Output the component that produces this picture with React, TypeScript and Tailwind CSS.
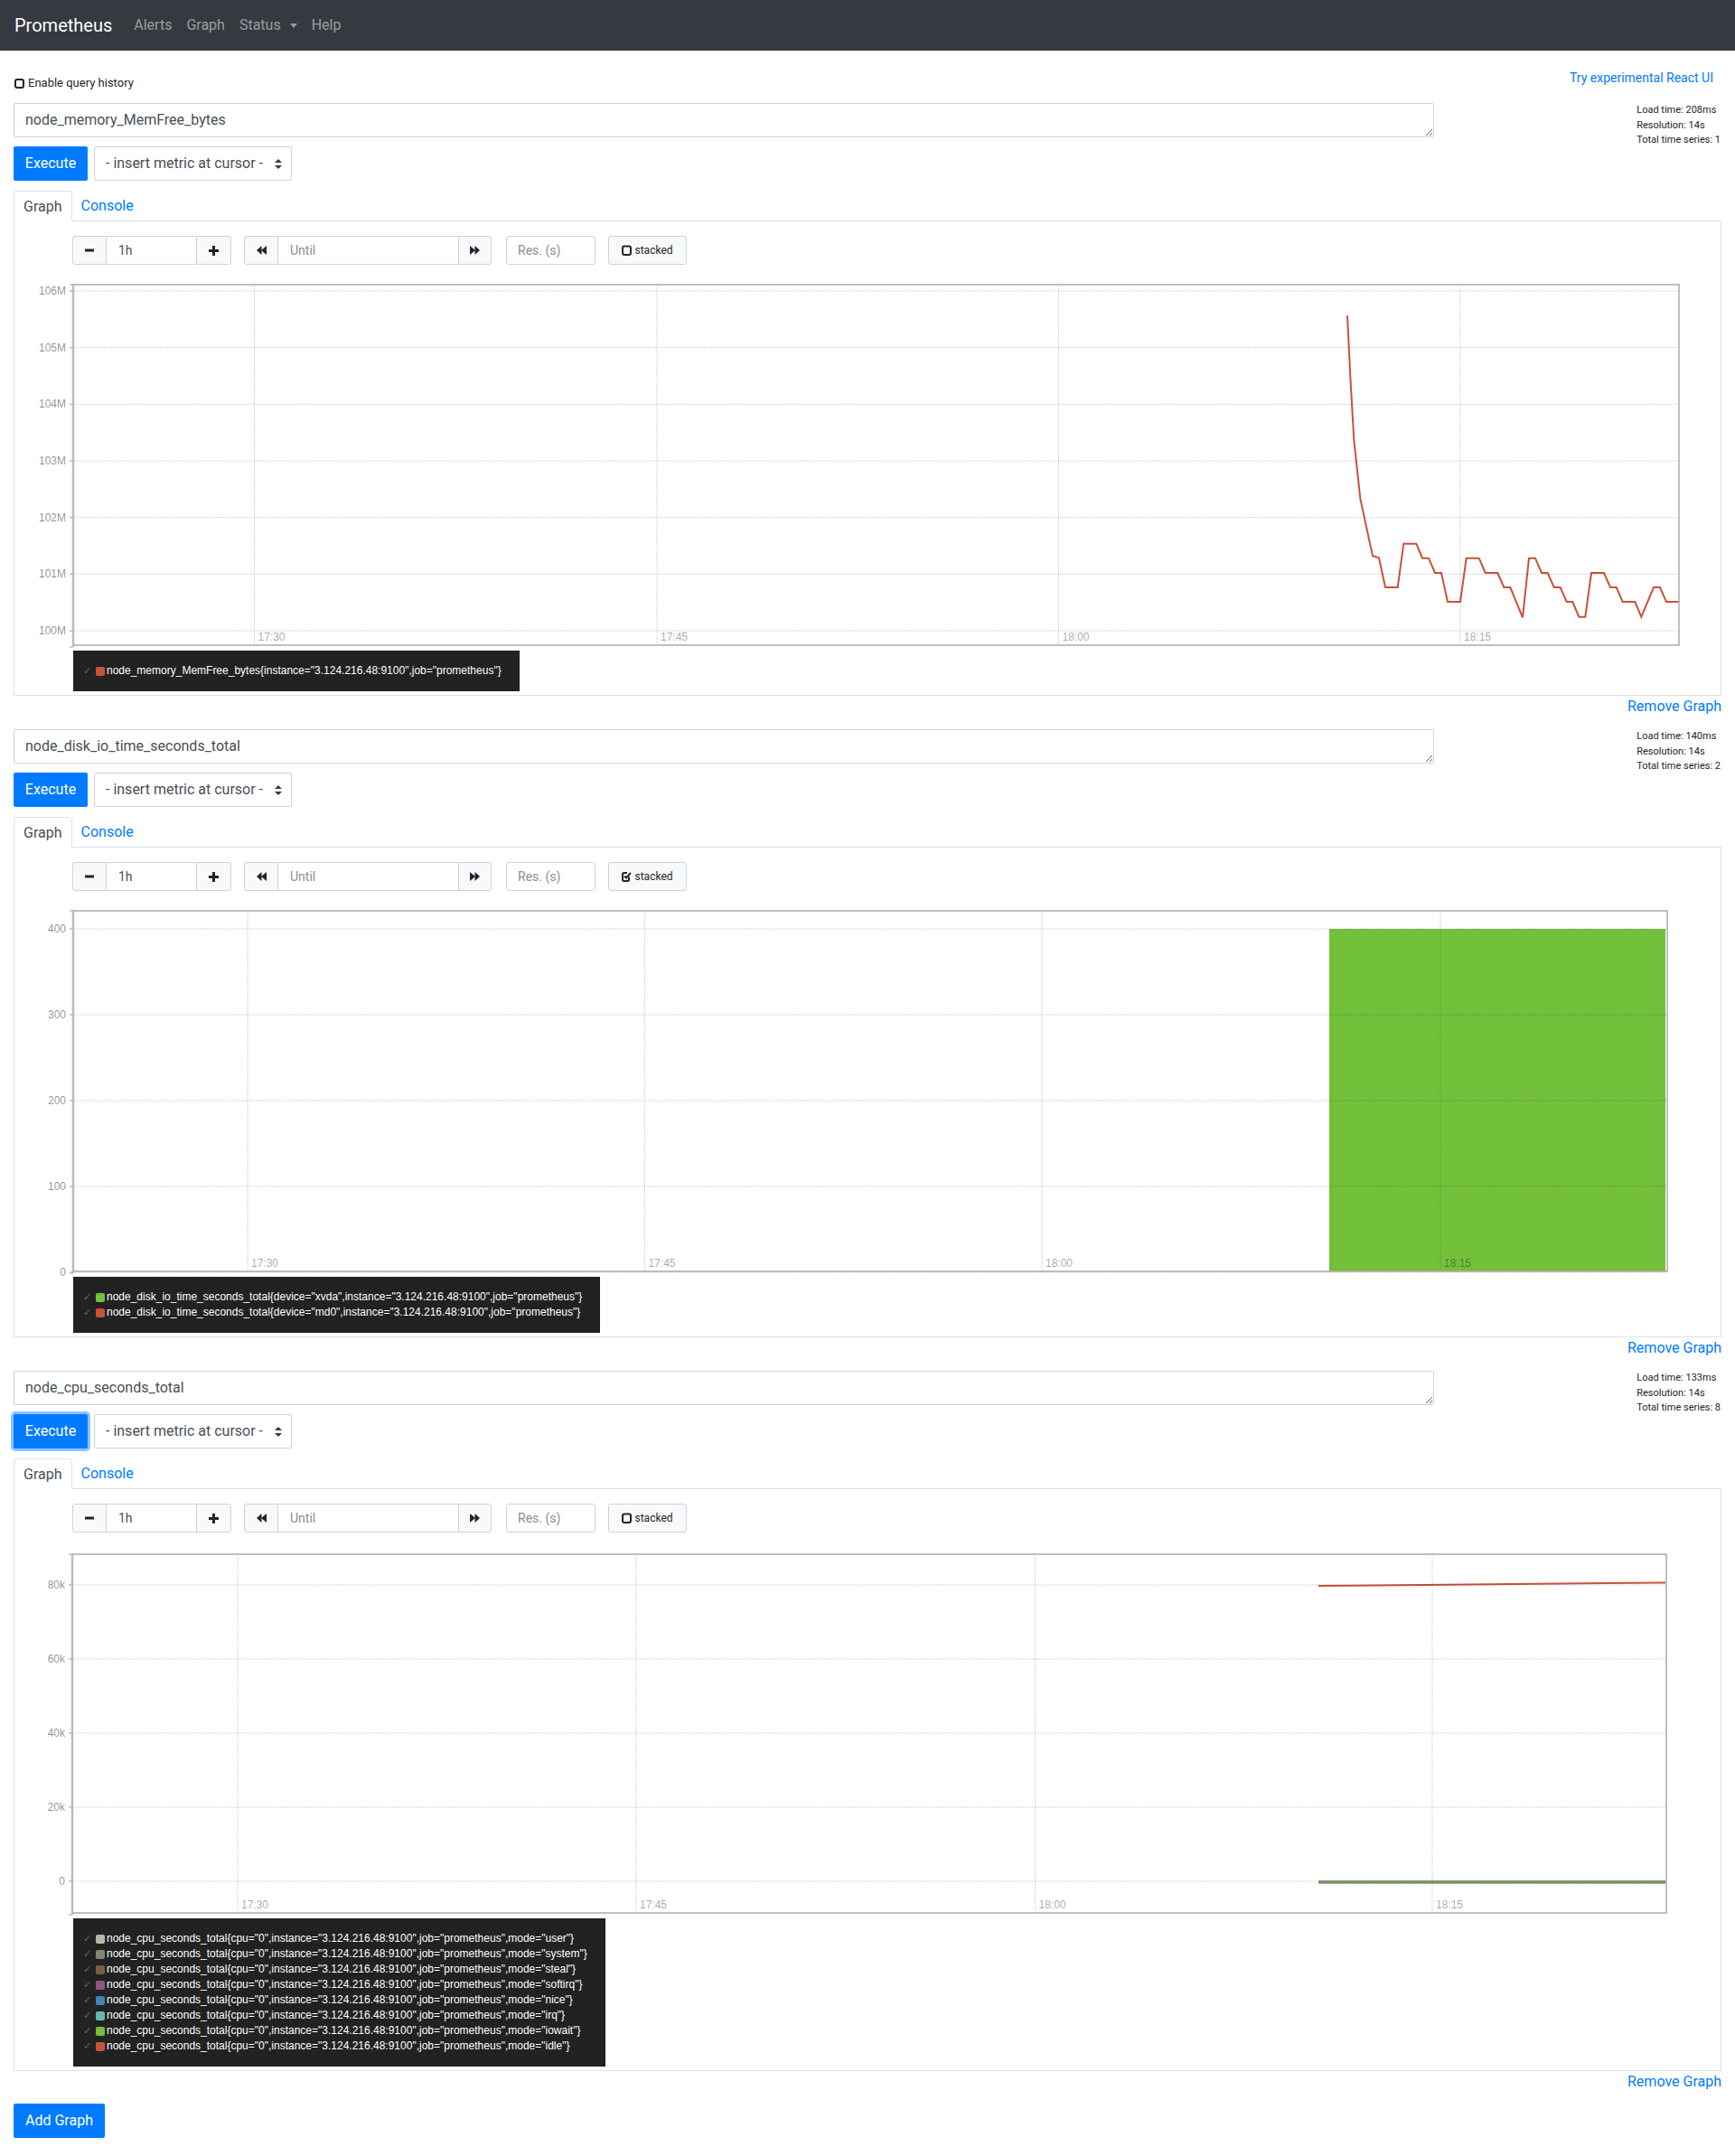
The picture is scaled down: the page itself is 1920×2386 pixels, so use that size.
import React from "react";

const ROBOTO = "font-[family-name:Roboto,'Noto_Sans',sans-serif]";
const ARIAL = "'Liberation Sans', Arial, sans-serif";

function Navbar() {
  return (
    <nav className="h-14 bg-[#343a40] flex items-center px-4">
      <span className="text-white text-[20px] leading-[30px] mr-4">Prometheus</span>
      <span className="px-2 text-base text-white/50">Alerts</span>
      <span className="px-2 text-base text-white/50">Graph</span>
      <span className="px-2 text-base text-white/50 flex items-center">
        Status
        <span className="ml-[10px] inline-block w-0 h-0 border-x-[4px] border-x-transparent border-t-[5px] border-t-white/50" />
      </span>
      <span className="px-2 text-base text-white/50">Help</span>
    </nav>
  );
}

function SelectArrows() {
  return (
    <svg width="8" height="11" viewBox="0 0 8 11">
      <polygon points="4,0 8,4 0,4" fill="#343a40" />
      <polygon points="0,7 8,7 4,11" fill="#343a40" />
    </svg>
  );
}

function MinusIcon() {
  return (
    <svg width="10" height="10" viewBox="0 0 10 10">
      <rect x="0" y="3.5" width="10" height="3" fill="#212529" />
    </svg>
  );
}
function PlusIcon() {
  return (
    <svg width="11" height="11" viewBox="0 0 11 11">
      <rect x="0" y="4" width="11" height="3" fill="#212529" />
      <rect x="4" y="0" width="3" height="11" fill="#212529" />
    </svg>
  );
}
function BackIcon() {
  return (
    <svg width="11" height="10" viewBox="0 0 11 10">
      <polygon points="0,5 5.5,0 5.5,10" fill="#212529" />
      <polygon points="5,5 11,0 11,10" fill="#212529" />
    </svg>
  );
}
function FwdIcon() {
  return (
    <svg width="11" height="10" viewBox="0 0 11 10">
      <polygon points="11,5 5.5,0 5.5,10" fill="#212529" />
      <polygon points="6,5 0,0 0,10" fill="#212529" />
    </svg>
  );
}
function SquareIcon({ checked }: { checked: boolean }) {
  return (
    <svg width="11" height="12" viewBox="0 0 11 12">
      {checked ? (
        <>
          <path d="M8,6.5 V9.5 a1.5,1.5 0 0 1 -1.5,1.5 H2.5 a1.5,1.5 0 0 1 -1.5,-1.5 V3.5 a1.5,1.5 0 0 1 1.5,-1.5 H6" fill="none" stroke="#212529" strokeWidth="2" />
          <path d="M3,5.5 L5,7.5 L10,2" fill="none" stroke="#212529" strokeWidth="2" />
        </>
      ) : (
        <rect x="1" y="1.5" width="9" height="9.5" rx="2" fill="none" stroke="#212529" strokeWidth="2" />
      )}
    </svg>
  );
}

type YT = { y: number; label: string };
type XT = { x: number; label: string };

function Chart({
  y0,
  right,
  top,
  bottom,
  yTicks,
  xTicks,
  children,
  left = 81,
}: {
  y0: number;
  right: number;
  top: number;
  bottom: number;
  yTicks: YT[];
  xTicks: XT[];
  children?: React.ReactNode;
  left?: number;
}) {
  return (
    <svg width="1888" height="411" viewBox={`16 ${y0} 1888 411`} overflow="visible" className="block mt-[12px] overflow-visible">
      {children}
      {yTicks.map((t) => (
        <line key={"h" + t.label} x1={left} x2={right} y1={t.y} y2={t.y} stroke="rgba(0,0,0,0.22)" strokeWidth="1" strokeDasharray="1 1" />
      ))}
      {xTicks.map((t) => (
        <line key={"v" + t.label} x1={t.x} x2={t.x} y1={top} y2={bottom} stroke="rgba(0,0,0,0.22)" strokeWidth="1" strokeDasharray="1 1" />
      ))}
      <rect x={left} y={top} width={right - left} height={bottom - top} fill="none" stroke="#aaaaaa" strokeWidth="1.5" />
      <line x1={left} x2={left} y1={top - 1} y2={bottom + 2} stroke="#bbbbbb" strokeWidth="2.5" />
      <line x1={left - 4} x2={left} y1={bottom + 2} y2={bottom + 2} stroke="#bbbbbb" strokeWidth="1.5" />
      <line x1={left - 4} x2={left} y1={top} y2={top} stroke="#bbbbbb" strokeWidth="1.5" />
      {yTicks.map((t) => (
        <g key={"yl" + t.label}>
          <line x1={left - 4} x2={left} y1={t.y} y2={t.y} stroke="#bbbbbb" strokeWidth="1.5" />
          <text x={left - 8} y={t.y + 4} textAnchor="end" fontFamily={ARIAL} fontSize="12" fill="rgba(0,0,0,0.45)">
            {t.label}
          </text>
        </g>
      ))}
      {xTicks.map((t) => (
        <text key={"xl" + t.label} x={t.x + 4} y={bottom - 5} fontFamily={ARIAL} fontSize="12" fill="rgba(0,0,0,0.36)">
          {t.label}
        </text>
      ))}
    </svg>
  );
}

const memZoom: [number, number][] = [
  [273, 148], [283, 350], [295, 560], [316, 755], [357, 946], [378, 952], [399, 1050], [440, 1050], [460, 905], [502, 905],
  [522, 953], [543, 953], [564, 1002], [585, 1002], [606, 1098], [648, 1098], [668, 953], [710, 953], [731, 1002],
  [772, 1002], [793, 1050], [814, 1050], [855, 1150], [876, 953], [897, 953], [918, 1002], [938, 1002], [959, 1050],
  [980, 1050], [1001, 1098], [1021, 1098], [1042, 1148], [1063, 1148], [1083, 1002], [1125, 1002], [1146, 1050],
  [1166, 1050], [1187, 1098], [1228, 1098], [1249, 1148], [1290, 1050], [1311, 1050], [1332, 1098], [1375, 1098],
];
const memPoints = memZoom.map(([x, y]) => `${(1400 + x / 3).toFixed(1)},${(300 + y / 3).toFixed(1)}`).join(" ");

function Chart1() {
  const yT = ["106M", "105M", "104M", "103M", "102M", "101M", "100M"].map((l, i) => ({ y: 322 + i * 62.67, label: l }));
  const xT = [
    { x: 281.5, label: "17:30" },
    { x: 727, label: "17:45" },
    { x: 1171.5, label: "18:00" },
    { x: 1616, label: "18:15" },
  ];
  return (
    <Chart y0={305} right={1858} top={315} bottom={714} yTicks={yT} xTicks={xT}>
      <polyline points={memPoints} fill="none" stroke="#cb513a" strokeWidth="2" strokeLinejoin="miter" />
    </Chart>
  );
}

function Chart2() {
  const yT = ["400", "300", "200", "100", "0"].map((l, i) => ({ y: 1028 + i * 95, label: l }));
  const xT = [
    { x: 274, label: "17:30" },
    { x: 713.5, label: "17:45" },
    { x: 1153, label: "18:00" },
    { x: 1594, label: "18:15" },
  ];
  return (
    <Chart y0={998} right={1845} top={1008} bottom={1407} yTicks={yT} xTicks={xT}>
      <rect x={1471} y={1028} width={1843 - 1471} height={1407 - 1028} fill="#73c03a" />
    </Chart>
  );
}

function Chart3() {
  const yT = ["80k", "60k", "40k", "20k", "0"].map((l, i) => ({ y: 1754 + i * 82, label: l }));
  const xT = [
    { x: 263, label: "17:30" },
    { x: 704, label: "17:45" },
    { x: 1145.5, label: "18:00" },
    { x: 1585, label: "18:15" },
  ];
  return (
    <Chart y0={1708} right={1844} top={1720} bottom={2117} yTicks={yT} xTicks={xT} left={80}>
      <line x1={1459} x2={1843} y1={2084} y2={2084} stroke="#73c03a" strokeWidth="1.5" />
      <line x1={1459} x2={1843} y1={2083.5} y2={2083.5} stroke="#65b9ac" strokeWidth="1.5" />
      <line x1={1459} x2={1843} y1={2083} y2={2083} stroke="#858772" strokeWidth="2" />
      <line x1={1459} x2={1843} y1={2081.5} y2={2081.5} stroke="#9fa88a" strokeWidth="1.5" />
      <line x1={1459} x2={1843} y1={1755} y2={1751.5} stroke="#cb513a" strokeWidth="2" />
    </Chart>
  );
}

type LegendItem = { color: string; label: string };

function Legend({ items }: { items: LegendItem[] }) {
  return (
    <div className="ml-[65px] mt-[4px] w-fit bg-[#222222] pt-[14px] pb-[14px] pl-[11px] pr-[20px]">
      {items.map((it, i) => (
        <div key={i} className="flex items-center h-[17px] whitespace-nowrap">
          <span className="w-[14px] text-[11px] text-[#666] font-[family-name:'DejaVu_Sans',sans-serif] leading-none">✓</span>
          <span className="w-[10px] h-[10px] rounded-[2px] mr-[2px] shrink-0" style={{ backgroundColor: it.color }} />
          <span className="text-white text-[12px] leading-[17px] font-[family-name:'Liberation_Sans',Arial,sans-serif]">{it.label}</span>
        </div>
      ))}
    </div>
  );
}

function Controls({ stacked }: { stacked: boolean }) {
  const btn = "h-[32px] flex items-center justify-center bg-[#f8f9fa] border border-[#cfd2d5]";
  const inp = "h-[32px] bg-white border border-[#ced4da] flex items-center text-[14px]";
  return (
    <div className="flex items-center ml-[64px] h-[32px]">
      <div className="flex">
        <div className={`${btn} w-[38px] rounded-l-[3px]`}><MinusIcon /></div>
        <div className={`${inp} w-[99px] pl-[13px] border-x-0 text-[#495057]`}>1h</div>
        <div className={`${btn} w-[39px] rounded-r-[3px]`}><PlusIcon /></div>
      </div>
      <div className="flex ml-[14px]">
        <div className={`${btn} w-[38px] rounded-l-[3px]`}><BackIcon /></div>
        <div className={`${inp} w-[199px] pl-[13px] border-x-0 text-[#8a9095]`}>Until</div>
        <div className={`${btn} w-[37px] rounded-r-[3px]`}><FwdIcon /></div>
      </div>
      <div className={`${inp} w-[99px] ml-[16px] pl-[12px] rounded-[3px] text-[#8a9095]`}>Res. (s)</div>
      <div className={`${btn} w-[87px] ml-[14px] rounded-[3px] text-[12px] text-[#212529] gap-[3px]`}>
        <SquareIcon checked={stacked} />
        <span>stacked</span>
      </div>
    </div>
  );
}

function Section({
  query,
  stats,
  stacked,
  focused,
  chart,
  legend,
}: {
  query: string;
  stats: string[];
  stacked: boolean;
  focused?: boolean;
  chart: React.ReactNode;
  legend: LegendItem[];
}) {
  return (
    <div>
      <div className="flex">
        <div className="w-[1600px] pl-[15px] pr-[13px]">
          <textarea
            readOnly
            defaultValue={query}
            className="block w-full h-[38px] border border-[#ced4da] rounded-[2px] px-[12px] py-[6px] text-[16px] leading-[24px] text-[#495057] overflow-hidden outline-none"
          />
          <div className="flex mt-[10px] h-[38px]">
            <div
              className={`w-[82px] h-[38px] bg-[#007bff] text-white text-[16px] flex items-center justify-center rounded-[2px] ${
                focused ? "shadow-[0_0_0_3px_rgba(0,123,255,0.45)]" : ""
              }`}
            >
              Execute
            </div>
            <div className="ml-[7px] w-[219px] h-[38px] border border-[#ced4da] rounded-[2px] flex items-center pl-[12px] pr-[10px] justify-between text-[16px] text-[#495057]">
              <span>- insert metric at cursor -</span>
              <SelectArrows />
            </div>
          </div>
        </div>
        <div className="flex-1 pr-[16px] flex justify-end">
          <div className="w-fit text-left text-[11px] leading-[16.5px] text-[#212529]">
            {stats.map((s) => (
              <div key={s}>{s}</div>
            ))}
          </div>
        </div>
      </div>
      <div className="mx-[15px] mt-[11px]">
        <div className="flex items-end h-[34px] border-b border-[#dee2e6]">
          <div className="h-[34px] -mb-px px-[10px] pt-[2px] flex items-center border border-[#dee2e6] border-b-white bg-white rounded-t-[4px] text-[16px] text-[#495057]">
            Graph
          </div>
          <div className="h-[34px] px-[10px] pt-[2px] flex items-center text-[16px] text-[#007bff]">Console</div>
        </div>
        <div className="border-x border-b border-[#dee2e6] pt-[16px] pb-[4px]">
          <Controls stacked={stacked} />
          {chart}
          <Legend items={legend} />
        </div>
        <div className="h-[24px] mb-[13px] text-right text-[16px] leading-[24px] text-[#007bff]">Remove Graph</div>
      </div>
    </div>
  );
}

const cpuModes: [string, string][] = [
  ["user", "#b5b6a9"],
  ["system", "#858772"],
  ["steal", "#785f43"],
  ["softirq", "#96557e"],
  ["nice", "#4682b4"],
  ["irq", "#65b9ac"],
  ["iowait", "#73c03a"],
  ["idle", "#cb513a"],
];

export default function App() {
  return (
    <div className={`${ROBOTO} bg-white w-[1920px] min-h-[2386px] text-[#212529]`}>
      <Navbar />
      <div className="h-[58px] flex justify-between items-start">
        <div className="ml-[16px] mt-[27px] flex items-center h-[18px]">
          <span className="w-[11px] h-[11px] border-2 border-[#222] rounded-[3px] mr-[4px]" />
          <span className="text-[13px] text-[#212529]">Enable query history</span>
        </div>
        <div className="mr-[24px] mt-[20px] h-[20px] leading-[20px] text-[14px] text-[#007bff]">Try experimental React UI</div>
      </div>
      <Section
        query="node_memory_MemFree_bytes"
        stats={["Load time: 208ms", "Resolution: 14s", "Total time series: 1"]}
        stacked={false}
        chart={<Chart1 />}
        legend={[{ color: "#cb513a", label: 'node_memory_MemFree_bytes{instance="3.124.216.48:9100",job="prometheus"}' }]}
      />
      <Section
        query="node_disk_io_time_seconds_total"
        stats={["Load time: 140ms", "Resolution: 14s", "Total time series: 2"]}
        stacked={true}
        chart={<Chart2 />}
        legend={[
          { color: "#73c03a", label: 'node_disk_io_time_seconds_total{device="xvda",instance="3.124.216.48:9100",job="prometheus"}' },
          { color: "#cb513a", label: 'node_disk_io_time_seconds_total{device="md0",instance="3.124.216.48:9100",job="prometheus"}' },
        ]}
      />
      <Section
        query="node_cpu_seconds_total"
        stats={["Load time: 133ms", "Resolution: 14s", "Total time series: 8"]}
        stacked={false}
        focused
        chart={<Chart3 />}
        legend={cpuModes.map(([m, c]) => ({
          color: c,
          label: `node_cpu_seconds_total{cpu="0",instance="3.124.216.48:9100",job="prometheus",mode="${m}"}`,
        }))}
      />
      <div className="ml-[15px] -mt-[1px] w-[101px] h-[38px] bg-[#007bff] text-white text-[16px] flex items-center justify-center rounded-[2px]">
        Add Graph
      </div>
    </div>
  );
}
